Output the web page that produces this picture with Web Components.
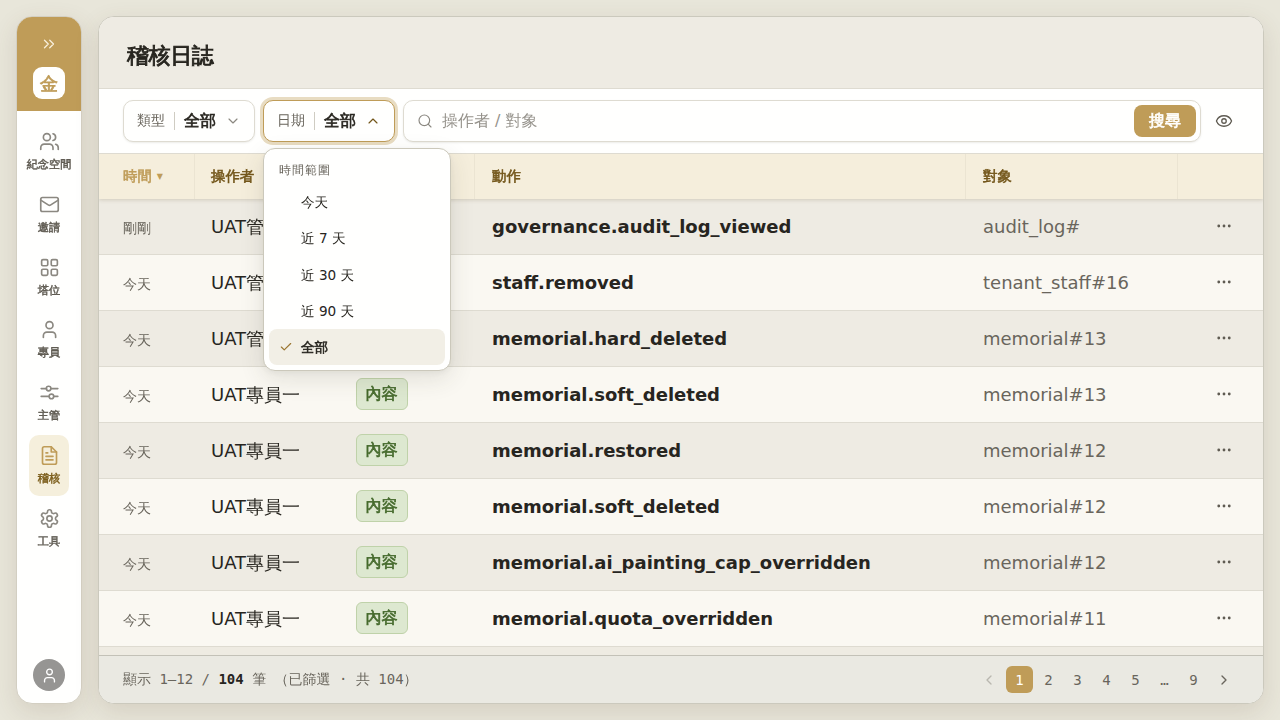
<!DOCTYPE html>
<html lang="zh-Hant">
<head>
<meta charset="utf-8">
<title>稽核日誌</title>
<style>
    html, body{
        height: 100%;
        margin: 0;
    }
    body{
        --gold: #bf9c58;
        --gold-dark: #73561a;
        --ink: #27251f;
        --muted: #69655c;
        --line: #dedbd1;
        /* Zen Hei has no bold face, thicken its strokes instead */
        --heavy: .04em;
        overflow: hidden;
        color: var(--ink);
        font-family: "DejaVu Sans", "WenQuanYi Zen Hei", "Noto Sans CJK TC", sans-serif;
        background: #e8e6da;
    }
</style>
</head>
<body>
<audit-app></audit-app>

<script>
const icons = {
    users: '<path d="M16 21v-2a4 4 0 0 0-4-4H6a4 4 0 0 0-4 4v2M16 3.13a4 4 0 0 1 0 7.75M22 21v-2a4 4 0 0 0-3-3.87"/><circle cx="9" cy="7" r="4"/>',
    mail: '<rect x="2" y="4" width="20" height="16" rx="2"/><path d="m22 7-8.97 5.7a1.94 1.94 0 0 1-2.06 0L2 7"/>',
    grid: '<rect x="3" y="3" width="7" height="7" rx="1.5"/><rect x="14" y="3" width="7" height="7" rx="1.5"/><rect x="14" y="14" width="7" height="7" rx="1.5"/><rect x="3" y="14" width="7" height="7" rx="1.5"/>',
    user: '<path d="M19 21v-2a4 4 0 0 0-4-4H9a4 4 0 0 0-4 4v2"/><circle cx="12" cy="7" r="4"/>',
    sliders: '<path d="M2.500 7.500h6M13.500 7.500h8M2.500 16.500h9M17 16.500h4.500"/><circle cx="11" cy="7.500" r="2.600"/><circle cx="14.200" cy="16.500" r="2.600"/>',
    file: '<path d="M14 2H6a2 2 0 0 0-2 2v16a2 2 0 0 0 2 2h12a2 2 0 0 0 2-2V8Z"/><path d="M14 2v6h6M10 9H8M16 13H8M16 17H8"/>',
    gear: '<path d="M12.22 2h-.44a2 2 0 0 0-2 2v.18a2 2 0 0 1-1 1.73l-.43.25a2 2 0 0 1-2 0l-.15-.08a2 2 0 0 0-2.73.73l-.22.38a2 2 0 0 0 .73 2.73l.15.1a2 2 0 0 1 1 1.72v.51a2 2 0 0 1-1 1.74l-.15.09a2 2 0 0 0-.73 2.73l.22.38a2 2 0 0 0 2.73.73l.15-.08a2 2 0 0 1 2 0l.43.25a2 2 0 0 1 1 1.73V20a2 2 0 0 0 2 2h.44a2 2 0 0 0 2-2v-.18a2 2 0 0 1 1-1.73l.43-.25a2 2 0 0 1 2 0l.15.08a2 2 0 0 0 2.73-.73l.22-.39a2 2 0 0 0-.73-2.73l-.15-.08a2 2 0 0 1-1-1.74v-.5a2 2 0 0 1 1-1.74l.15-.09a2 2 0 0 0 .73-2.73l-.22-.38a2 2 0 0 0-2.73-.73l-.15.08a2 2 0 0 1-2 0l-.43-.25a2 2 0 0 1-1-1.73V4a2 2 0 0 0-2-2z"/><circle cx="12" cy="12" r="3"/>',
    expand: '<path d="m6 17 5-5-5-5M13 17l5-5-5-5"/>',
    down: '<path d="m6 9 6 6 6-6"/>',
    up: '<path d="m18 15-6-6-6 6"/>',
    left: '<path d="m15 18-6-6 6-6"/>',
    right: '<path d="m9 18 6-6-6-6"/>',
    check: '<path d="M20 6 9 17l-5-5"/>',
    search: '<circle cx="11" cy="11" r="8"/><path d="m21 21-4.300-4.300"/>',
    eye: '<path d="M2.06 12.35a1 1 0 0 1 0-.7 10.75 10.75 0 0 1 19.88 0 1 1 0 0 1 0 .7 10.75 10.75 0 0 1-19.88 0"/><circle cx="12" cy="12" r="3"/>',
    more: '<g fill="currentColor"><circle cx="5" cy="12" r="1"/><circle cx="12" cy="12" r="1"/><circle cx="19" cy="12" r="1"/></g>'
};

class UiIcon extends HTMLElement{
    connectedCallback(){
        const size = this.getAttribute('size') || 20;
        const stroke = this.getAttribute('stroke') || 1.75;
        this.attachShadow({ mode: 'open' }).innerHTML = `
            <style>
            :host{ display: block; flex: none; width: ${size}px; height: ${size}px; }
            svg{ display: block; }
            </style>
            <svg width="${size}" height="${size}" viewBox="0 0 24 24" fill="none" stroke="currentColor" stroke-width="${stroke}" stroke-linecap="round" stroke-linejoin="round">${icons[this.getAttribute('name')]}</svg>`;
    }
}
customElements.define('ui-icon', UiIcon);

class NavItem extends HTMLElement{
    connectedCallback(){
        this.attachShadow({ mode: 'open' }).innerHTML = `
            <style>
            :host{
                display: flex;
                flex-direction: column;
                align-items: center;
                box-sizing: border-box;
                min-width: 40px;
                height: 60.8px;
                padding-top: 10px;
                gap: 5px;
                border-radius: 10px;
                color: #8b8881;
            }
            span{
                font-size: 11.200px;
                font-weight: 600;
                -webkit-text-stroke: var(--heavy);
                line-height: 16px;
                color: #5f5b52;
                white-space: nowrap;
            }
            :host([active]){ background: #f5efdc; color: var(--gold); }
            :host([active]) span{ color: #7c5e1c; }
            </style>
            <ui-icon name="${this.getAttribute('icon')}" size="21" stroke="1.9"></ui-icon>
            <span><slot></slot></span>`;
    }
}
customElements.define('nav-item', NavItem);

class SideBar extends HTMLElement{
    connectedCallback(){
        this.attachShadow({ mode: 'open' }).innerHTML = `
            <style>
            :host{
                display: flex;
                flex-direction: column;
                flex: none;
                width: 64px;
                border: 1px solid #d3cfc2;
                border-radius: 16px;
                overflow: hidden;
                background: #fffffe;
                box-shadow: 0 8px 24px rgba(100, 70, 50, .14);
            }
            header{
                display: flex;
                flex-direction: column;
                align-items: center;
                box-sizing: border-box;
                height: 94px;
                padding-top: 18px;
                gap: 14px;
                background: var(--gold);
                color: #f8efdb;
            }
            .logo{
                width: 32px;
                height: 32px;
                border-radius: 9px;
                background: #fffffe;
                color: var(--gold);
                font-size: 18px;
                font-weight: 700;
                -webkit-text-stroke: var(--heavy);
                line-height: 33px;
                text-align: center;
            }
            nav{
                display: flex;
                flex-direction: column;
                align-items: center;
                gap: 2px;
                padding-top: 10px;
            }
            .avatar{
                display: grid;
                place-items: center;
                width: 32px;
                height: 32px;
                margin: auto auto 12px;
                border-radius: 50%;
                background: #969593;
                color: #fff;
            }
            </style>
            <header>
                <ui-icon name="expand" size="18"></ui-icon>
                <div class="logo">金</div>
            </header>
            <nav><slot></slot></nav>
            <div class="avatar"><ui-icon name="user" size="17" stroke="1.9"></ui-icon></div>`;
    }
}
customElements.define('side-bar', SideBar);

class FilterSelect extends HTMLElement{
    connectedCallback(){
        const open = this.hasAttribute('open');
        this.attachShadow({ mode: 'open' }).innerHTML = `
            <style>
            :host{ display: block; position: relative; flex: none; }
            .trigger{
                display: flex;
                align-items: center;
                box-sizing: border-box;
                width: 132px;
                height: 42px;
                padding: 0 13px;
                border: 1px solid var(--line);
                border-radius: 10px;
                background: #fffffe;
                box-shadow: 0 1px 2px rgba(70, 65, 45, .1);
                color: #8b8881;
            }
            :host([open]) .trigger{
                border-color: var(--gold);
                box-shadow: 0 0 0 3px #e8dcc2;
                color: var(--gold-dark);
            }
            .label{ font-size: 14px; color: var(--muted); }
            .rule{ width: 1px; height: 18px; margin: 0 9px; background: #cfccc2; }
            .value{ font-size: 16px; font-weight: 600; -webkit-text-stroke: var(--heavy); color: var(--ink); }
            ui-icon{ margin-left: auto; }
            ::slotted(*){ position: absolute; top: 48px; left: 0; z-index: 5; }
            </style>
            <div class="trigger">
                <span class="label">${this.getAttribute('label')}</span>
                <span class="rule"></span>
                <span class="value">${this.getAttribute('value')}</span>
                <ui-icon name="${open ? 'up' : 'down'}" size="16"></ui-icon>
            </div>
            <slot></slot>`;
    }
}
customElements.define('filter-select', FilterSelect);

class MenuPanel extends HTMLElement{
    connectedCallback(){
        this.attachShadow({ mode: 'open' }).innerHTML = `
            <style>
            :host{
                display: block;
                box-sizing: border-box;
                width: 188px;
                height: 223px;
                padding: 5px;
                border: 1px solid #cbc8bb;
                border-radius: 12px;
                background: #fffffe;
                box-shadow: 0 8px 24px rgba(60, 55, 40, .12), 0 2px 5px rgba(60, 55, 40, .05);
            }
            .title{
                height: 30px;
                padding-left: 10px;
                font-size: 12px;
                letter-spacing: 1px;
                line-height: 33px;
                color: var(--muted);
            }
            </style>
            <div class="title">${this.getAttribute('heading')}</div>
            <slot></slot>`;
    }
}
customElements.define('menu-panel', MenuPanel);

class MenuOption extends HTMLElement{
    connectedCallback(){
        this.attachShadow({ mode: 'open' }).innerHTML = `
            <style>
            :host{
                display: flex;
                align-items: center;
                box-sizing: border-box;
                height: 36.200px;
                padding: 0 10px;
                gap: 8px;
                border-radius: 8px;
                font-size: 13.600px;
            }
            .mark{ width: 14px; color: #9a7530; }
            .text{ padding-top: 2.400px; }
            :host([selected]){ background: #f2efe6; font-weight: 600; }
            :host([selected]) .text{ -webkit-text-stroke: var(--heavy); }
            </style>
            <span class="mark">${this.hasAttribute('selected') ? '<ui-icon name="check" size="14" stroke="2"></ui-icon>' : ''}</span>
            <span class="text"><slot></slot></span>`;
    }
}
customElements.define('menu-option', MenuOption);

class SearchField extends HTMLElement{
    connectedCallback(){
        this.attachShadow({ mode: 'open' }).innerHTML = `
            <style>
            :host{
                display: flex;
                align-items: center;
                flex: 1;
                box-sizing: border-box;
                height: 42px;
                padding: 0 4px 0 13px;
                gap: 9px;
                border: 1px solid var(--line);
                border-radius: 10px;
                background: #fffffe;
                box-shadow: 0 1px 2px rgba(70, 65, 45, .1);
                color: #8b8881;
                font-size: 16px;
            }
            .hint{ flex: 1; color: #96938c; }
            .go{
                width: 62px;
                height: 32px;
                border-radius: 8px;
                background: var(--gold);
                color: #fffffe;
                font-weight: 600;
                -webkit-text-stroke: var(--heavy);
                line-height: 32px;
                text-align: center;
            }
            </style>
            <ui-icon name="search" size="16"></ui-icon>
            <span class="hint"><slot></slot></span>
            <div class="go">搜尋</div>`;
    }
}
customElements.define('search-field', SearchField);

class AuditTable extends HTMLElement{
    connectedCallback(){
        const rows = [
            ['剛剛', 'UAT管理員', '', 'governance.audit_log_viewed', 'audit_log#'],
            ['今天', 'UAT管理員', '', 'staff.removed', 'tenant_staff#16'],
            ['今天', 'UAT管理員', '', 'memorial.hard_deleted', 'memorial#13'],
            ['今天', 'UAT專員一', '內容', 'memorial.soft_deleted', 'memorial#13'],
            ['今天', 'UAT專員一', '內容', 'memorial.restored', 'memorial#12'],
            ['今天', 'UAT專員一', '內容', 'memorial.soft_deleted', 'memorial#12'],
            ['今天', 'UAT專員一', '內容', 'memorial.ai_painting_cap_overridden', 'memorial#12'],
            ['今天', 'UAT專員一', '內容', 'memorial.quota_overridden', 'memorial#11']
        ];
        this.attachShadow({ mode: 'open' }).innerHTML = `
            <style>
            :host{ display: block; flex: 1; min-height: 0; overflow: hidden; background: #eeebe2; }
            .row{
                display: grid;
                grid-template-columns: 96px 145px 135px 491px 212px 1fr;
                box-sizing: border-box;
                height: 56px;
                border-bottom: 1px solid var(--line);
                background: #eeebe3;
                font-size: 18px;
            }
            .row.alt{ background: #faf8f2; }
            .row > *{
                display: flex;
                align-items: center;
                box-sizing: border-box;
                padding-left: 16px;
                white-space: nowrap;
            }
            .row > :first-child{ padding-left: 24px; }
            .row > :nth-child(4), .row > :nth-child(5){ padding-left: 17px; }
            .row > :last-child{ justify-content: center; padding: 0 0 2px 7px; color: #5f5b52; }
            .row.head{
                position: relative;
                height: 45px;
                border-bottom: 0;
                background: #f5eedc;
                box-shadow: 0 1px 4px rgba(90, 75, 30, .2);
                color: var(--gold-dark);
                font-size: 14.400px;
                font-weight: 700;
                -webkit-text-stroke: var(--heavy);
            }
            .head > *{ border-right: 1px solid #ebe4d2; }
            .head > :last-child{ border-right: 0; }
            .head .sorted{ color: var(--gold); gap: 5px; }
            .sorted small{ font-size: 8px; -webkit-text-stroke: 0; }
            .time{ font-size: 14px; color: var(--muted); padding-top: 4px; }
            .action{ font-weight: 700; }
            .target{ color: var(--muted); }
            .tag{ padding-bottom: 2px; }
            .badge{
                box-sizing: border-box;
                width: 52px;
                height: 32px;
                padding-right: 1px;
                border: 1px solid #bfd2a9;
                border-radius: 6px;
                background: #dde8d0;
                color: #456a2c;
                font-size: 16px;
                font-weight: 600;
                -webkit-text-stroke: var(--heavy);
                line-height: 30px;
                text-align: center;
            }
            </style>
            <div class="row head">
                <span class="sorted">時間<small>▼</small></span>
                <span>操作者</span>
                <span>類型</span>
                <span>動作</span>
                <span>對象</span>
                <span></span>
            </div>
            ${rows.map(([time, who, tag, action, target], i) => `
            <div class="row ${i % 2 ? 'alt' : ''}">
                <span class="time">${time}</span>
                <span>${who}</span>
                <span class="tag">${tag ? `<b class="badge">${tag}</b>` : ''}</span>
                <span class="action">${action}</span>
                <span class="target">${target}</span>
                <span><ui-icon name="more" size="18" stroke="1.75"></ui-icon></span>
            </div>`).join('')}`;
    }
}
customElements.define('audit-table', AuditTable);

class PageFooter extends HTMLElement{
    connectedCallback(){
        this.attachShadow({ mode: 'open' }).innerHTML = `
            <style>
            :host{
                display: flex;
                align-items: center;
                justify-content: space-between;
                flex: none;
                box-sizing: border-box;
                height: 48px;
                padding: 0 24px;
                border-top: 1px solid #c3c1b7;
                background: #eae9e2;
                color: var(--muted);
                font: 14px "DejaVu Sans Mono", "WenQuanYi Zen Hei", "Noto Sans CJK TC", monospace;
            }
            b{ color: var(--ink); }
            .pages{ display: flex; gap: 2px; }
            .pages span{
                display: grid;
                place-items: center;
                width: 27px;
                height: 27px;
                border-radius: 6px;
            }
            .pages .current{ background: var(--gold); color: #fffffe; }
            .pages .off{ color: #b9b7af; }
            .pages .arrow{ width: 30px; }
            </style>
            <div>顯示 1–12 / <b>104</b> 筆 （已篩選 · 共 104）</div>
            <div class="pages">
                <span class="arrow off"><ui-icon name="left" size="16" stroke="2"></ui-icon></span>
                <span class="current">1</span>
                <span>2</span>
                <span>3</span>
                <span>4</span>
                <span>5</span>
                <span>…</span>
                <span>9</span>
                <span class="arrow"><ui-icon name="right" size="16" stroke="2"></ui-icon></span>
            </div>`;
    }
}
customElements.define('page-footer', PageFooter);

class AuditApp extends HTMLElement{
    connectedCallback(){
        this.attachShadow({ mode: 'open' }).innerHTML = `
            <style>
            :host{
                display: flex;
                box-sizing: border-box;
                height: 720px;
                padding: 16px;
                gap: 16px;
            }
            main{
                display: flex;
                flex: 1;
                flex-direction: column;
                min-width: 0;
                border: 1px solid #cbc9bd;
                border-radius: 16px;
                overflow: hidden;
                background: #fffffe;
                box-shadow: 0 8px 24px rgba(100, 70, 50, .14);
            }
            h1{
                flex: none;
                box-sizing: border-box;
                height: 72px;
                margin: 0;
                padding-left: 28px;
                border-bottom: 1px solid var(--line);
                background: #eeebe3;
                font-size: 22px;
                font-weight: 700;
                -webkit-text-stroke: var(--heavy);
                letter-spacing: -.4px;
                line-height: 77px;
            }
            .tools{
                display: flex;
                align-items: center;
                flex: none;
                box-sizing: border-box;
                height: 65px;
                padding: 0 30px 0 24px;
                gap: 8px;
                border-bottom: 1px solid var(--line);
                z-index: 2;
            }
            .tools > ui-icon{ margin-left: 6px; color: #5f5b52; }
            </style>
            <side-bar>
                <nav-item icon="users">紀念空間</nav-item>
                <nav-item icon="mail">邀請</nav-item>
                <nav-item icon="grid">塔位</nav-item>
                <nav-item icon="user">專員</nav-item>
                <nav-item icon="sliders">主管</nav-item>
                <nav-item icon="file" active>稽核</nav-item>
                <nav-item icon="gear">工具</nav-item>
            </side-bar>
            <main>
                <h1>稽核日誌</h1>
                <div class="tools">
                    <filter-select label="類型" value="全部"></filter-select>
                    <filter-select label="日期" value="全部" open>
                        <menu-panel heading="時間範圍">
                            <menu-option>今天</menu-option>
                            <menu-option>近 7 天</menu-option>
                            <menu-option>近 30 天</menu-option>
                            <menu-option>近 90 天</menu-option>
                            <menu-option selected>全部</menu-option>
                        </menu-panel>
                    </filter-select>
                    <search-field>操作者 / 對象</search-field>
                    <ui-icon name="eye" size="18"></ui-icon>
                </div>
                <audit-table></audit-table>
                <page-footer></page-footer>
            </main>`;
    }
}
customElements.define('audit-app', AuditApp);
</script>
</body>
</html>
